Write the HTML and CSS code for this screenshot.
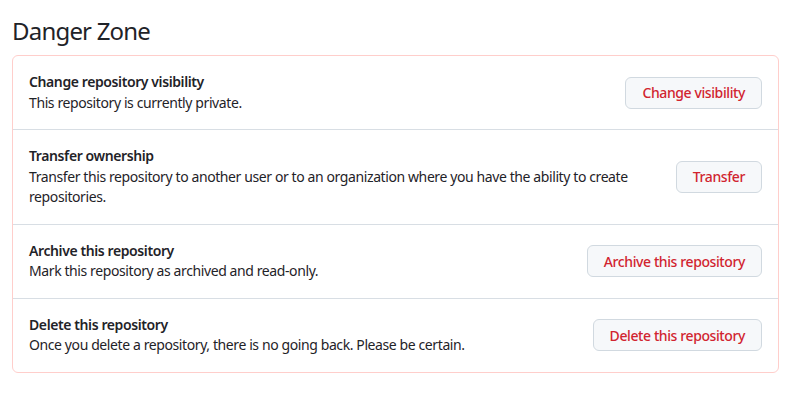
FILE: index.html
```html
<!DOCTYPE html>
<html lang="en">
  <head>
    <meta charset="UTF-8" />
    <meta name="viewport" content="width=device-width, initial-scale=1.0" />
    <title>Danger Zone</title>
    <link rel="stylesheet" href="styles.css">
  </head>
  <body>
    <div class="settings">
      <h2 class="subhead">Danger Zone</h2>

      <div class="danger-box">
        <div class="danger-row">
          <div class="danger-text">
            <strong>Change repository visibility</strong>
            <p>This repository is currently private.</p>
          </div>
          <button class="danger-btn">Change visibility</button>
        </div>

        <div class="danger-row">
          <div class="danger-text">
            <strong>Transfer ownership</strong>
            <p>
              Transfer this repository to another user or to an organization
              where you have the ability to create repositories.
            </p>
          </div>
          <button class="danger-btn">Transfer</button>
        </div>

        <div class="danger-row">
          <div class="danger-text">
            <strong>Archive this repository</strong>
            <p>Mark this repository as archived and read-only.</p>
          </div>
          <button class="danger-btn">Archive this repository</button>
        </div>

        <div class="danger-row">
          <div class="danger-text">
            <strong>Delete this repository</strong>
            <p>
              Once you delete a repository, there is no going back. Please be
              certain.
            </p>
          </div>
          <button class="danger-btn">Delete this repository</button>
        </div>
      </div>
    </div>
  </body>
</html>
```

FILE: styles.css
```css
* {
  box-sizing: border-box;
  margin: 0;
  padding: 0;
}

body {
  background: #fff;
  color: #1f2328;
  font-family: "Noto Sans", "Open Sans", sans-serif;
  font-size: 14px;
  line-height: 20.5px;
  letter-spacing: -0.4px;
}

.settings {
  padding: 16px 33px 0 12px;
}

.subhead {
  font-size: 24px;
  font-weight: 400;
  line-height: 30px;
  letter-spacing: -0.8px;
  margin-bottom: 9px;
}

.danger-box {
  border: 1px solid #ffcecb;
  border-radius: 6px;
}

.danger-row {
  display: flex;
  align-items: center;
  gap: 16px;
  padding: 16px;
}

.danger-row + .danger-row {
  border-top: 1px solid #d8dee4;
}

.danger-text {
  flex: 1;
}

.danger-text strong {
  display: block;
  font-weight: 600;
}

.danger-btn {
  height: 32px;
  padding: 0 16px;
  border: 1px solid #d1d9e0;
  border-radius: 6px;
  background: #f6f8fa;
  color: #d1242f;
  font-family: inherit;
  font-size: 14px;
  font-weight: 500;
  letter-spacing: -0.4px;
  white-space: nowrap;
  cursor: pointer;
}
```
